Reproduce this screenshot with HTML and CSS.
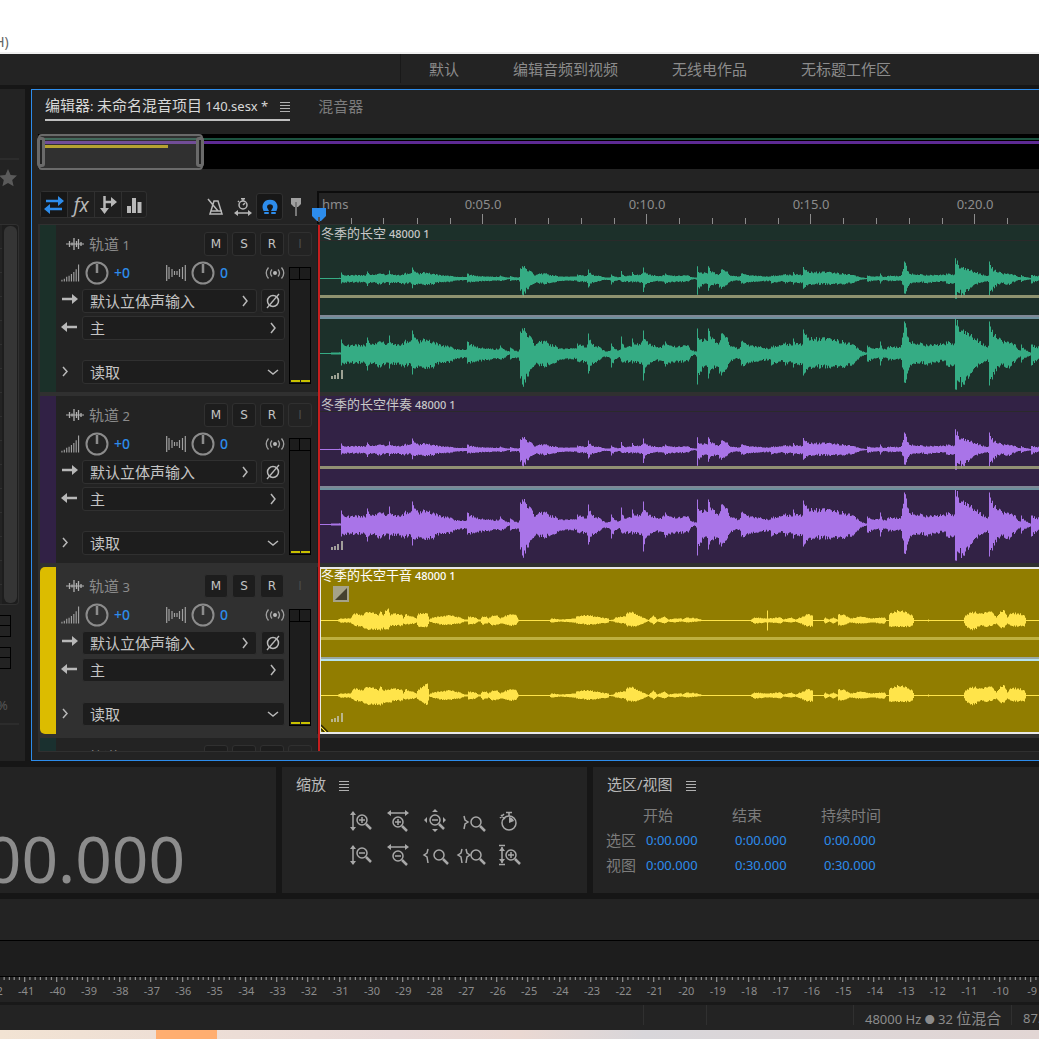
FILE: index.html
```html
<!DOCTYPE html>
<html lang="zh-CN">
<head>
  <meta charset="UTF-8" />
  <title>未命名混音项目 140.sesx</title>
  <link rel="stylesheet" href="styles.css">
</head>
<body>
  <div class="menubar"><span>(H)</span></div>

  <nav class="workspaces">
    <div class="workspace-list">
      <a href="#">默认</a>
      <a href="#">编辑音频到视频</a>
      <a href="#">无线电作品</a>
      <a href="#">无标题工作区</a>
    </div>
  </nav>

  <main class="main">
    <aside class="rail">
      <div class="rail-top">
        <svg width="18" height="18" viewBox="0 0 18 18"><path d="M9 0l2.600 6 6.400.600-4.800 4.300 1.400 6.400L9 14l-5.600 3.300 1.400-6.400L0 6.600 6.400 6z" fill="#5a5a5a"/></svg>
      </div>
      <div class="rail-list"><div class="rail-thumb"></div></div>
      <div class="rail-box"></div>
      <div class="rail-box"></div>
      <div class="rail-percent">%</div>
    </aside>

    <section class="editor">
      <div class="tabs">
        <div class="tab active">
          <span><span class="zh">编辑器</span>: <span class="zh">未命名混音项目</span> 140.sesx *</span>
          <svg class="burger" width="10" height="10" viewBox="0 0 10 10"><path d="M0 .5h10M0 3.500h10M0 6.500h10M0 9.500h10"/></svg>
        </div>
        <div class="tab zh">混音器</div>
      </div>

      <div class="overview">
        <div class="strip strip-green"></div>
        <div class="strip strip-purple"></div>
        <div class="strip strip-yellow"></div>
        <div class="navigator"><i></i><i></i></div>
      </div>

      <div class="toolbar">
        <div class="tools">
          <div class="tool-group">
            <button class="on" aria-label="输入/输出"><svg width="20" height="18" viewBox="0 0 20 18"><path d="M2 5h13M5 13h13" stroke="#2d8ceb" stroke-width="2.500"/><path d="M14 0l6 5-6 5zM6 8l-6 5 6 5z" fill="#2d8ceb"/></svg></button>
            <button aria-label="效果" class="fx">fx</button>
            <button aria-label="发送"><svg width="18" height="20" viewBox="0 0 18 20"><path d="M5.500 1v13M6 7h8" stroke="#b8b8b8" stroke-width="2.500"/><path d="M12 2l6 5-6 5zM1 13h9l-4.500 6z" fill="#b8b8b8"/></svg></button>
            <button aria-label="均衡"><svg width="16" height="16" viewBox="0 0 16 16"><path d="M1 9h4v7H1zM6 1h4v15H6zM11.500 5h4v11h-4z" fill="#b8b8b8"/></svg></button>
          </div>
          <div class="tool-group right">
            <button aria-label="节拍器"><svg width="18" height="18" viewBox="0 0 18 18"><path d="M7 3h4l4 13H3zM4 13h11M1 1l10 12" fill="none" stroke="#b8b8b8" stroke-width="1.500"/></svg></button>
            <button aria-label="时间伸缩"><svg width="18" height="18" viewBox="0 0 18 18"><circle cx="9" cy="7" r="4" fill="none" stroke="#b8b8b8" stroke-width="1.500"/><path d="M7 .700h4M9 1v2M4 3l1 1M9 7l2-2M2 15h14" stroke="#b8b8b8" stroke-width="1.500"/><path d="M4 12v6l-4-3zM14 12v6l4-3z" fill="#b8b8b8"/></svg></button>
            <button class="on" aria-label="对齐"><svg width="18" height="18" viewBox="0 0 18 18"><path d="M5.500 16V13C2 9 4 4 9 4s7 5 3.500 9v3" fill="none" stroke="#2d8ceb" stroke-width="4.500"/><path d="M2 13.500h6M10 13.500h6" stroke="#191919" stroke-width="1"/></svg></button>
            <button aria-label="标记"><svg width="12" height="20" viewBox="0 0 12 20"><path d="M1 1h10v6l-3 3H4L1 7z" fill="#a0a0a0"/><path d="M6 5v14" stroke="#777" stroke-width="2"/></svg></button>
          </div>
        </div>
        <div class="ruler" id="ruler"></div>
      </div>

      <div class="tracks" id="tracks"><div class="playhead"></div></div>
    </section>
  </main>

  <section class="panels">
    <div class="panel panel-time"><output>0:00.000</output></div>
    <div class="panel panel-zoom">
      <h2><span class="zh">缩放</span><svg class="burger" width="10" height="10" viewBox="0 0 10 10"><path d="M0 .5h10M0 3.500h10M0 6.500h10M0 9.500h10"/></svg></h2>
      <div class="zoom-grid" id="zoomGrid"></div>
    </div>
    <div class="panel panel-range">
      <h2><span><span class="zh">选区</span>/<span class="zh">视图</span></span><svg class="burger" width="10" height="10" viewBox="0 0 10 10"><path d="M0 .5h10M0 3.500h10M0 6.500h10M0 9.500h10"/></svg></h2>
      <table>
        <tr><td></td><th>开始</th><th>结束</th><th>持续时间</th></tr>
        <tr><th>选区</th><td>0:00.000</td><td>0:00.000</td><td>0:00.000</td></tr>
        <tr><th>视图</th><td>0:00.000</td><td>0:30.000</td><td>0:30.000</td></tr>
      </table>
    </div>
  </section>

  <section class="levels">
    <div class="levels-top"></div>
    <div class="levels-bar"></div>
    <div class="levels-scale" id="levels"></div>
  </section>

  <footer class="status">
    <span class="cell-s"></span>
    <span class="cell-m"></span>
    <span class="cell-l">48000 Hz <span class="dot">●</span> 32 <span class="zh">位混合</span></span>
    <span class="cell-xs">87.89 MB</span>
  </footer>
  <div class="wallpaper"><div></div></div>

  <script src="app.js"></script>
</body>
</html>
```

FILE: styles.css
```css
* {
  box-sizing: border-box;
}
body {
  margin: 0;
  background: #161616;
  color: #b8b8b8;
  font-family: "Noto Sans", "Noto Sans CJK SC", sans-serif;
  font-size: 13px;
  line-height: 20px;
  overflow: hidden;
}
button, select {
  font-family: inherit;
  color: inherit;
  margin: 0;
}
button {
  display: flex;
  align-items: center;
  justify-content: center;
  padding: 0;
  background: none;
  border: 0;
}
svg {
  display: block;
  flex: none;
}
.zh {
  font-size: 15px;
}
.burger {
  stroke: #b0b0b0;
  stroke-width: 1;
}

/* top bars */
.menubar {
  height: 54px;
  background: #fff;
  border-bottom: 2px solid #f0f0f0;
  color: #666;
  display: flex;
  align-items: flex-end;
}
.menubar span {
  margin-left: -10px;
  font-size: 14px;
}
.workspaces {
  height: 31px;
  background: #232323;
  padding-left: 400px;
}
.workspace-list {
  height: 29px;
  border-left: 1px solid #191919;
  padding-left: 28px;
  display: flex;
  align-items: center;
  gap: 54px;
}
.workspace-list a {
  color: #8c8c8c;
  text-decoration: none;
  font-size: 15px;
  white-space: nowrap;
}

/* main area */
.main {
  display: flex;
  gap: 6px;
  padding-top: 4px;
}
.rail {
  width: 25px;
  background: #232323;
  flex: none;
  overflow: hidden;
}
.rail-top {
  height: 60px;
  margin: 69px 6px 6px 0;
  border-top: 2px solid #2c2c2c;
  padding-top: 9px;
}
.rail-top svg {
  margin-left: -1px;
}
.rail-list {
  height: 381px;
  width: 19px;
  border: 1px solid #303030;
  border-left: 0;
  border-radius: 0 4px 4px 0;
  padding: 1px 1px 1px 4px;
  background: repeating-linear-gradient(#232323 0 23px, #303030 23px 24px) 0 0 / 2px 100% no-repeat #1d1d1d;
}
.rail-thumb {
  height: 100%;
  border-radius: 6px;
  background: #353535;
}
.rail-box {
  width: 11px;
  height: 22px;
  margin-top: 10px;
  margin-bottom: 8px;
  border: 1px solid #000;
  border-left: 0;
  background: linear-gradient(#000, #000) 0 9px / 100% 1px no-repeat;
}
.rail-percent {
  margin: 26px 6px 0 0;
  padding-bottom: 8px;
  border-bottom: 2px solid #2c2c2c;
  color: #555;
  text-indent: -3px;
}
.editor {
  flex: 1;
  min-width: 0;
  padding: 1px 0 8px 6px;
  background: #232323;
  border: 1px solid #2d8ceb;
  border-right: 0;
}
.tabs {
  display: flex;
  gap: 28px;
  padding-left: 7px;
  color: #7c7c7c;
  line-height: 30px;
  height: 30px;
}
.tab {
  white-space: nowrap;
}
.tab.active {
  display: flex;
  align-items: center;
  gap: 12px;
  color: #d8d8d8;
  border-bottom: 2px solid #c0c0c0;
}
.tab .burger {
  margin-top: 4px;
}

/* overview strip */
.overview {
  position: relative;
  height: 35px;
  margin-top: 13px;
  background: #000;
  padding-top: 4px;
}
.strip {
  margin-bottom: 1px;
}
.strip-green {
  height: 2px;
  background: #1c5340;
}
.strip-purple {
  height: 3px;
  background: #5d2a94;
}
.strip-yellow {
  height: 3px;
  width: 130px;
  background: #c0a400;
}
.navigator {
  position: absolute;
  left: 0;
  top: 0;
  width: 165px;
  height: 36px;
  border: 2px solid #6a6a6a;
  border-radius: 4px;
  background: rgba(160, 160, 160, .3);
  display: flex;
  justify-content: space-between;
  align-items: center;
}
.navigator i {
  width: 8px;
  height: 30px;
  border: 3px solid #6a6a6a;
  border-radius: 3px;
  margin: 0 -3px;
  background: #232323;
}

/* toolbar and time ruler */
.toolbar {
  display: flex;
  height: 55px;
  padding-top: 22px;
}
.tools {
  flex: none;
  width: 279px;
  height: 27px;
  padding-left: 2px;
  display: flex;
  justify-content: space-between;
}
.tool-group {
  display: flex;
  height: 27px;
  border: 1px solid #303030;
  border-radius: 3px;
  background: #1f1f1f;
}
.tool-group button {
  width: 27px;
  border-right: 1px solid #303030;
}
.tool-group button.on {
  background: #171717;
}
.tool-group .fx {
  font: italic 19px "Noto Sans", sans-serif;
}
.tool-group button:last-child {
  width: 24px;
  border-right: 0;
}
.tool-group.right {
  border: 0;
  background: none;
  margin: 2px 9px 0 0;
}
.tool-group.right button {
  width: 27px;
  border: 0;
}
.tool-group.right button.on {
  border: 1px solid #303030;
  border-radius: 3px;
}
.tool-group.right button:last-child {
  width: 25px;
}
.ruler {
  flex: 1;
  min-width: 0;
  height: 33px;
  border-top: 2px solid #0c0c0c;
  border-left: 2px solid #0c0c0c;
  display: flex;
  overflow: hidden;
  color: #8c8c8c;
}
.ruler div {
  flex: none;
  width: 164px;
  padding-top: 1px;
  text-align: center;
}
.ruler .ruler-unit {
  width: 82px;
  text-align: left;
  padding-left: 3px;
}
.ruler .ruler-unit svg {
  margin-left: -3px;
}

/* tracks */
.tracks {
  position: relative;
  height: 528px;
  overflow: hidden;
  border-left: 2px solid #2e2e2e;
  border-top: 1px solid #303030;
  border-bottom: 1px solid #303030;
}
.track {
  display: flex;
  height: 171px;
  border-bottom: 4px solid #303030;
}
.track-head {
  flex: none;
  width: 277px;
  display: flex;
}
.track-color {
  width: 16px;
  background: var(--dim);
}
.track.selected .track-head {
  background: #303030;
}
.track.selected .track-color {
  border-radius: 5px 0 0 5px;
  background: #dcbc00;
}
.track-body {
  flex: 1;
  padding: 7px 6px 0 5px;
}
.track-title {
  display: flex;
  align-items: center;
  gap: 4px;
  height: 24px;
  margin-right: -1px;
  color: #8c8c8c;
}
.track-title svg {
  margin-left: 5px;
}
.track-name {
  flex: 1;
  padding-left: 1px;
  white-space: nowrap;
}
.track-title button,
.phase {
  width: 24px;
  height: 24px;
  border: 1px solid #303030;
  border-radius: 3px;
  background: #1d1d1d;
  color: #c4c4c4;
  font-family: "DejaVu Sans", sans-serif;
  font-size: 12px;
}
.track-title button:disabled {
  color: #4a4a4a;
  background: none;
}
.track-controls {
  display: flex;
  gap: 4px;
}
.track-rows {
  flex: 1;
}
.row {
  display: flex;
  align-items: center;
  height: 24px;
  gap: 4px;
  margin-top: 3px;
}
.row > svg:first-child {
  width: 17px;
}
.row.knobs {
  gap: 5px;
  margin: 5px 0 4px;
  color: #2d8ceb;
  font-size: 14px;
  font-weight: 500;
}
.row.knobs > svg:first-child {
  width: 19px;
}
.row.knobs .gain {
  width: 47px;
}
.row.knobs .pan {
  flex: 1;
}
.row.automation {
  margin-top: 20px;
}
.pick {
  position: relative;
  flex: 1;
}
.pick select {
  appearance: none;
  display: block;
  width: 100%;
  height: 24px;
  padding: 0 7px;
  border: 1px solid #303030;
  border-radius: 3px;
  background: #1d1d1d;
  color: #c4c4c4;
  font-size: 15px;
}
.pick svg {
  position: absolute;
  right: 6px;
  top: 6px;
  pointer-events: none;
}
.meter {
  width: 22px;
  height: 117px;
  margin-top: 11px;
  border: 1px solid #000;
  display: grid;
  grid-template-columns: 1fr 1fr;
  grid-template-rows: 12px 1fr;
  background: #1d1d1d;
}
.meter i {
  border-bottom: 1px solid #000;
}
.meter i:nth-child(odd) {
  border-right: 1px solid #000;
}
.meter i:nth-child(n+3) {
  border: 0;
  border-bottom: 2px solid #c8c000;
  margin: 0 0 1px 1px;
}
.lane {
  flex: 1;
  min-width: 0;
  padding-left: 3px;
  background: #1d1d1d;
}
.clip {
  position: relative;
  height: 167px;
  background: var(--clip);
  overflow: hidden;
}
.clip-name {
  height: 16px;
  line-height: 16px;
  padding-left: 1px;
  font-size: 11px;
  color: #c8c8c8;
  font-weight: 500;
  white-space: nowrap;
  border-bottom: 1px solid #2a2a2a;
}
.clip-name .zh {
  font-size: 13px;
  font-weight: 400;
}
.clip > svg {
  position: absolute;
  left: 0;
  top: 0;
  width: 100%;
  height: 167px;
}
.clip .clip-level {
  left: 11px;
  top: 145px;
  width: 12px;
  height: 9px;
}
.clip .clip-fade {
  left: 12px;
  top: 17px;
  width: 16px;
  height: 16px;
}
.clip .clip-corner {
  left: 0;
  top: 155px;
  width: 8px;
  height: 8px;
}
.selected .clip {
  border: 2px solid #e8e8e8;
  border-right: 0;
  border-left-width: 1px;
}
.selected .clip > .wave {
  top: -2px;
  left: -1px;
  width: calc(100% + 1px);
}
.selected .clip .clip-level {
  left: 10px;
  top: 144px;
}
.selected .clip-name {
  color: #fff;
  border-bottom: 0;
  height: 14px;
  line-height: 12px;
  padding-left: 0;
}
.playhead {
  position: absolute;
  z-index: 2;
  left: 278px;
  top: 0;
  bottom: 0;
  width: 2px;
  background: #c41e1e;
}
.marker {
  position: absolute;
  z-index: 3;
  left: 312px;
  top: 208px;
}

/* lower panels */
.panels {
  display: flex;
  gap: 6px;
  margin: 6px 0;
  height: 126px;
}
.panel {
  background: #232323;
  overflow: hidden;
}
.panel h2 {
  display: flex;
  align-items: center;
  gap: 13px;
  margin: 7px 0 0;
  padding-left: 14px;
  height: 20px;
  font-size: 15px;
  font-weight: 400;
}
.panel h2 .burger {
  margin-top: 3px;
}
.panel-time {
  flex: 0 0 276px;
  display: flex;
  align-items: center;
  justify-content: flex-end;
  padding: 58px 91px 0 0;
  color: #8c8c8c;
  font-size: 64px;
  line-height: 66px;
}
.panel-zoom {
  flex: 0 0 305px;
}
.panel-range {
  flex: 1;
}
.zoom-grid {
  display: grid;
  grid-template-columns: repeat(5, 37px);
  grid-auto-rows: 34px;
  margin: 10px 0 0 60px;
}
.zoom-grid svg {
  fill: none;
  stroke: #a8a8a8;
  stroke-width: 1.5;
}
.zoom-grid .solid {
  fill: #a8a8a8;
  stroke: none;
}
.panel-range table {
  margin: 8px 0 0 13px;
  border-collapse: collapse;
  table-layout: fixed;
  width: 290px;
}
.panel-range th,
.panel-range td {
  height: 25px;
  padding: 0;
  width: 89px;
  text-align: left;
}
.panel-range th {
  font-size: 15px;
  font-weight: 400;
  color: #7c7c7c;
}
.panel-range td {
  color: #2d8ceb;
  padding-left: 3px;
}
.panel-range tr > :first-child {
  width: 37px;
}

/* level scale */
.levels-top {
  height: 42px;
  background: #232323;
  border-bottom: 1px solid #000;
}
.levels-bar {
  height: 36px;
  background: #1d1d1d;
  border-bottom: 1px solid #000;
}
.levels {
  overflow: hidden;
}
.levels-scale {
  display: flex;
  height: 25px;
  margin: 0 -9px 0 -21px;
  background: #232323;
}
.levels-scale div {
  flex: 1;
  min-width: 0;
  text-align: center;
  font-size: 11px;
  line-height: 18px;
  color: #8c8c8c;
}
.levels-scale svg {
  width: 100%;
}
.status {
  display: flex;
  justify-content: flex-end;
  height: 28px;
  border-top: 3px solid #191919;
  background: #232323;
  color: #8c8c8c;
  line-height: 26px;
  overflow: hidden;
}
.status > span {
  flex: none;
  white-space: nowrap;
  border-left: 1px solid #303030;
  padding-left: 11px;
  height: 20px;
}
.status .dot {
  font-size: 10px;
}
.cell-s {
  width: 63px;
}
.cell-m {
  width: 147px;
}
.cell-l {
  width: 158px;
}
.cell-xs {
  width: 28px;
}
.wallpaper {
  height: 9px;
  background: linear-gradient(90deg, #f2e3d3, #e8d9d8 38%, #ead8d2 50%, #d8d6da 62%, #e2d6d4);
}
.wallpaper div {
  width: 61px;
  height: 9px;
  margin-left: 156px;
  background: #ffae70;
}
```

FILE: app.js
```js
// envelope points: x, peak above, peak below
const music = [
  [320,.5,.5],[329,.5,.5],[331,1,1],[340,1,1],[341,14,12],[343,9,10],[350,8,9],[364,8,9],[367,16,17],[370,9,9],
  [377,11,13],[380,12,14],[387,10,9],[389,18,15],[391,10,10],[399,8,11],[404,12,14],[410,12,10],[412,23,21],[414,16,15],
  [418,12,12],[423,15,14],[434,11,13],[440,9,9],[452,6,8],[458,4,5],[466,4,4],[467,12,10],[475,7,8],[490,5,6],
  [498,4,5],[500,8,6],[505,3,4],[509,2,1],[510,6,6],[518,2,4],[520,22,25],[522,25,31],[525,22,29],[529,18,18],
  [532,14,14],[535,8,11],[538,11,11],[545,12,13],[548,10,11],[556,7,9],[560,5,6],[576,5,5],[577,10,8],[586,6,8],
  [588,20,20],[591,10,12],[600,6,6],[606,2,3],[610,3,5],[611,10,14],[618,3,4],[620,4,5],[621,17,8],[624,6,8],
  [630,7,8],[632,15,10],[634,9,9],[641,11,9],[643,23,27],[645,14,14],[655,7,7],[659,6,7],[665,12,13],[672,7,8],
  [688,8,8],[694,2,1],[696,2,3],[697,25,31],[700,14,18],[706,13,12],[708,25,25],[712,16,15],[716,11,13],[719,11,20],
  [721,20,22],[727,16,14],[730,7,8],[739,5,5],[741,12,12],[748,9,10],[758,7,8],[770,5,6],[771,7,12],[780,8,8],
  [785,11,12],[791,8,9],[793,15,14],[795,9,10],[802,9,10],[803,24,22],[808,16,14],[815,14,13],[830,15,15],[838,13,13],
  [845,11,13],[853,9,11],[858,5,6],[866,1,1],[867,8,8],[872,5,6],[878,5,4],[880,12,12],[883,4,4],[888,7,7],
  [900,6,5],[902,16,14],[904,32,29],[906,26,26],[908,16,17],[913,10,10],[920,11,9],[927,8,12],[935,9,9],[944,9,7],[946,12,12],
  [954,10,11],[955,36,36],[958,27,28],[963,24,31],[970,18,20],[977,15,14],[985,8,8],[987,6,6],[989,32,32],[994,18,21],
  [1000,15,12],[1009,10,15],[1015,9,8],[1020,3,3],[1021,9,9],[1030,1,2],[1031,9,12],[1039,6,6]
];
const voice = [
  [320,.5,.5],[337,.5,.5],[340,2,2],[350,2,2],[354,7,5],[362,5,6],[365,8,8],[372,8,9],[378,5,9],[380,9,10],[383,5,7],
  [385,10,9],[388,12,9],[390,5,5],[393,7,5],[402,5,5],[403,2,3],[405,6,4],[414,3,3],[416,2,2],[418,7,6],[427,7,6],
  [429,1,1],[432,3,2],[440,4,4],[450,5,4],[460,3,3],[464,1,1],[467,1,1],[468,4,4],[475,3,3],[478,1,1],[480,1,1],
  [482,4,4],[486,4,3],[488,2,2],[492,5,5],[497,5,4],[500,2,3],[505,5,4],[506,4,4],[509,6,5],[516,5,4],[518,1,1],
  [519,.5,.5],[549,.5,.5],[551,2,2],[560,1,1],[575,2,2],[576,4,3],[588,5,4],[600,3,3],[608,2,2],[609,.5,.5],[613,1,1],
  [615,3,2],[625,4,3],[627,8,6],[633,8,6],[640,4,4],[645,2,2],[648,.5,.5],[653,5,4],[657,1,1],[664,4,3],[668,1,1],
  [674,2,2],[681,2,1],[682,1,1],[686,3,2],[697,2,1],[702,.5,.5],[750,.5,.5],[754,3,3],[766,2,2],[767,10,10],[768,2,2],
  [780,3,3],[783,1,1],[791,3,2],[795,1,1],[803,4,4],[807,6,6],[812,5,6],[813,.5,.5],[823,.5,.5],[825,3,3],[829,1,1],
  [833,3,3],[837,1,1],[838,6,5],[845,5,4],[850,2,2],[860,4,3],[870,2,2],[884,3,3],[886,.5,.5],[888,.5,.5],[889,6,6],
  [894,9,6],[902,10,6],[908,7,6],[912,5,5],[914,.5,.5],[927,.5,.5],[928,1,1],[929,.5,.5],[963,.5,.5],[965,5,5],
  [970,8,9],[974,8,9],[980,7,5],[984,8,6],[992,8,5],[996,3,3],[1000,9,7],[1004,10,7],[1007,3,3],[1010,7,5],
  [1018,7,6],[1024,5,6],[1026,.5,.5],[1039,.5,.5]
];
// the right voice channel differs in a few peaks only
const voiceRight = voice.map(([x, up, down]) => {
  if (x >= 385 && x <= 390) return [x, 6, 7];
  if (x === 418) return [x, 6, 4];
  if (x === 427) return [x, 12, 9];
  if (x === 767) return [x, 2, 2];
  return [x, up, down];
});
const quiet = a => .3 * a + .007 * a * a + .3;
const full = a => a;

// music: sharp attack, quick decay; voice: even swell
const struck = (a, b, t) => a + (b - a) * (b > a ? t * t * t : Math.sqrt(t));
const even = (a, b, t) => a + (b - a) * t;

function wavePath(points, mid, scale, ease, rough) {
  let top = "", bottom = "", seed = 7, k = 0;
  const jitter = () => {
    seed = (seed * 16807) % 2147483647;
    return 1 + rough * ((seed % 1000) / 500 - 1);
  };
  for (let x = 320; x < 1039; x++) {
    while (k < points.length - 2 && points[k + 1][0] <= x) k++;
    const [x0, u0, d0] = points[k], [x1, u1, d1] = points[k + 1];
    const t = (x - x0) / (x1 - x0);
    const up = scale(ease(u0, u1, t) * (t === 0 ? 1 : jitter()));
    const down = scale(ease(d0, d1, t) * (t === 0 ? 1 : jitter()));
    const px = x - 320;
    top += `L${px} ${(mid - up).toFixed(1)}H${px + 1}`;
    bottom = `L${px + 1} ${(mid + down).toFixed(1)}H${px}` + bottom;
  }
  return `M0 ${mid}${top}${bottom}Z`;
}

const chevron = `<svg width="12" height="12" viewBox="0 0 12 12"><path d="M4 1l4 5-4 5" fill="none" stroke="#b8b8b8" stroke-width="1.500"/></svg>`;
const chevronDown = `<svg width="12" height="12" viewBox="0 0 12 12"><path d="M1 4l5 4 5-4" fill="none" stroke="#b8b8b8" stroke-width="1.500"/></svg>`;
const knob = `<svg width="24" height="24" viewBox="0 0 24 24"><circle cx="12" cy="12" r="10.500" fill="none" stroke="#8c8c8c" stroke-width="2"/><path d="M12 3v9" stroke="#8c8c8c" stroke-width="2.500"/></svg>`;
const bars = (list, h) => list.map(([x, n]) => `M${x} ${h - n}v${n}`).join("");

const tracks = [
  { name: 1, clip: "冬季的长空", dim: "#1b3029", bg: "#1c302a", wave: "#35ac84", left: music, right: music },
  { name: 2, clip: "冬季的长空伴奏", dim: "#312145", bg: "#322245", wave: "#a974e8", left: music, right: music },
  { name: 3, clip: "冬季的长空干音", dim: "#dcbc00", bg: "#917d00", wave: "#ffe44a", left: voice, right: voiceRight, selected: true },
  { name: 4, dim: "#1a302f" }
];

function clipHtml(t) {
  const sel = t.selected;
  const ease = sel ? even : struck;
  const rough = sel ? .15 : .18;
  return `<div class="clip">
    <div class="clip-name"><span class="zh">${t.clip}</span> 48000 1</div>
    <svg class="wave" viewBox="0 0 719 167" preserveAspectRatio="none">
      <path d="${wavePath(t.left, 53.5, sel ? full : quiet, ease, rough)}" fill="${t.wave}"/>
      <path d="${wavePath(t.right, 128.5, full, ease, rough)}" fill="${t.wave}"/>
      <path d="M0 71.500h719" stroke="${sel ? "#c6b94a" : "#a3a57c"}" stroke-opacity=".85" stroke-width="3"/>
      <path d="M0 91.500h719" stroke="${sel ? "#9aa7a0" : "#7f8896"}" stroke-width="3"/>
      <path d="M0 93h719" stroke="${sel ? "#b5e3ee" : "#6c8f9c"}" stroke-width="2"/>
    </svg>
    <svg class="clip-level" viewBox="0 0 12 9"><path d="${bars([[1, 3], [4, 4], [7, 6], [11, 9]], 9)}" stroke="#c8c8b8" stroke-width="1.500"/></svg>
    ${sel ? `<svg class="clip-fade" viewBox="0 0 16 16"><path d="M0 0h16v16H0z" fill="#a5a289"/><path d="M14 2v12H2z" fill="#45412f"/></svg>
    <svg class="clip-corner" viewBox="0 0 8 8"><path d="M0 1l7 7M0 5l3 3" stroke="#2a2500" stroke-width="1.300"/><path d="M0 3l5 5" stroke="#ffe44a"/></svg>` : ""}
  </div>`;
}

function trackHtml(t) {
  const n = t.name;
  return `<div class="track ${t.selected ? "selected" : ""}" style="--dim:${t.dim};--clip:${t.bg || "none"}">
    <div class="track-head">
      <div class="track-color"></div>
      <div class="track-body">
        <div class="track-title">
          <svg width="18" height="14" viewBox="0 0 18 14"><path d="M0 7h18" stroke="#b0b0b0"/><path d="M3.500 4v6M6 5.500v3M8 1v12M10.500 4v6M12.500 2v10M15 5v4" stroke="#b0b0b0" stroke-width="1.300"/></svg>
          <span class="track-name"><span class="zh">轨道</span> ${n}</span>
          <button>M</button><button>S</button><button>R</button><button disabled>I</button>
        </div>
        <div class="track-controls">
          <div class="track-rows">
            <div class="row knobs">
              <svg height="18" viewBox="0 0 20 18"><path d="${bars([[1, 2], [3.5, 3], [6, 5], [8.5, 6], [11, 8], [13.5, 10], [16, 13], [18.5, 18]], 18)}" stroke="#a0a0a0" stroke-width="1.200"/></svg>
              ${knob}<span class="gain">+0</span>
              <svg width="20" height="18" viewBox="0 0 20 18"><path d="M.7 1v16M3 3v12M6 5v8M8.500 7v4M11 7v4M13.500 5v8M16.500 3v12M19.300 1v16" stroke="#a0a0a0" stroke-width="1.200"/></svg>
              ${knob}<span class="pan">0</span>
              <svg width="20" height="12" viewBox="0 0 20 12"><circle cx="10" cy="6" r="2" fill="#b8b8b8"/><path d="M7 2.500q-3 3.500 0 7M13 2.500q3 3.500 0 7M3.500 .5q-4.500 5.500 0 11M16.500 .5q4.500 5.500 0 11" fill="none" stroke="#a0a0a0" stroke-width="1.300"/></svg>
            </div>
            <div class="row">
              <svg height="14" viewBox="0 0 17 14"><path d="M1 5h11" stroke="#b8b8b8" stroke-width="2.500"/><path d="M11 0l6 5-6 5z" fill="#b8b8b8"/></svg>
              <label class="pick"><select aria-label="输入 ${n}"><option>默认立体声输入</option></select>${chevron}</label>
              <button class="phase" aria-label="反相"><svg width="16" height="16" viewBox="0 0 16 16"><circle cx="8" cy="8" r="5.500" fill="none" stroke="#b8b8b8" stroke-width="1.500"/><path d="M2 15L14 1" stroke="#b8b8b8" stroke-width="1.300"/></svg></button>
            </div>
            <div class="row">
              <svg height="14" viewBox="0 0 17 14"><path d="M5 6h11" stroke="#b8b8b8" stroke-width="2.500"/><path d="M6 1L0 6l6 5z" fill="#b8b8b8"/></svg>
              <label class="pick"><select aria-label="输出 ${n}"><option>主</option></select>${chevron}</label>
            </div>
            <div class="row automation">
              <svg height="12" viewBox="0 0 17 12"><path d="M2 1l4 4.500L2 10" fill="none" stroke="#b8b8b8" stroke-width="1.500"/></svg>
              <label class="pick"><select aria-label="自动化 ${n}"><option>读取</option></select>${chevronDown}</label>
            </div>
          </div>
          <div class="meter"><i></i><i></i><i></i><i></i></div>
        </div>
      </div>
    </div>
    <div class="lane">${t.clip ? clipHtml(t) : ""}</div>
  </div>`;
}
document.getElementById("tracks").insertAdjacentHTML("beforeend", tracks.map(trackHtml).join(""));

// time ruler
const tick = (x, h) => `M${x} ${10 - h}v${h}`;
let ruler = `<div class="ruler-unit">hms<svg width="82" height="10"><path d="${tick(32.5, 6)}${tick(64.5, 6)}" stroke="#8c8c8c" shape-rendering="crispEdges"/></svg></div>`;
for (const s of ["0:05.0", "0:10.0", "0:15.0", "0:20.0"]) {
  ruler += `<div>${s}<svg width="164" height="10"><path d="${tick(16.5, 6)}${tick(49.5, 6)}${tick(81.5, 10)}${tick(114.5, 6)}${tick(147.5, 6)}" stroke="#8c8c8c" shape-rendering="crispEdges"/></svg></div>`;
}
document.getElementById("ruler").innerHTML = ruler;
document.getElementById("ruler").insertAdjacentHTML("afterend",
  `<svg class="marker" width="14" height="14" viewBox="0 0 14 14"><path d="M0 0h14v8l-5 5H5L0 8z" fill="#2d8ceb"/><path d="M7 9v5" stroke="#555" stroke-width="2"/></svg>`);

// level scale, one cell per dB
let levels = "";
for (let db = -42; db <= -9; db++) {
  levels += `<div><svg height="5" viewBox="0 0 30 5" preserveAspectRatio="none"><path d="M4 0v3M9 0v3M14 0v5M19 0v3M24 0v3M29 0v3" stroke="#8c8c8c" stroke-width="1.200"/></svg>${db}</div>`;
}
document.getElementById("levels").innerHTML = levels;

// zoom buttons
const lens = (x, y, sign) => `<circle cx="${x}" cy="${y}" r="5"/><path d="M${x + 4} ${y + 4}l5 5" stroke-width="2.500"/>`
  + (sign ? `<path d="M${x - 3} ${y}h6${sign === "+" ? `M${x} ${y - 3}v6` : ""}"/>` : "");
const vert = `<path d="M4 3v18"/><path class="solid" d="M1 6l3-4 3 4zM1 18l3 4 3-4z"/>`;
const horiz = `<path d="M3 4h18"/><path class="solid" d="M5 1v6L1 4zM19 1v6l4-3z"/>`;
const icons = [
  ["放大（振幅）", vert + lens(13, 11, "+")],
  ["放大（时间）", horiz + lens(12, 13, "+")],
  ["全部缩小", lens(12, 11, "-") + `<path class="solid" d="M9 3l3-3 3 3zM9 20l3 3 3-3zM4 8v6l-3-3zM20 8v6l3-3z"/>`],
  ["放大至出点", `<path d="M4 7l1 4 3 2-3 2-1 5"/>` + lens(16, 13)],
  ["按时间缩放", `<circle cx="12" cy="14" r="7"/><path d="M9 3.500h6M12 3v4M4 6l4 4M3 9l4-4"/><path class="solid" d="M12 14V8a6 6 0 0 1 5 4z"/>`],
  ["缩小（振幅）", vert + lens(13, 10, "-")],
  ["缩小（时间）", horiz + lens(12, 13, "-")],
  ["放大至入点", `<path d="M5 6L4 10l-3 2 3 2 1 6"/>` + lens(16, 12)],
  ["缩放至选区", `<path d="M2 6l-1 4-3 2 3 2 1 6M6 6l1 4 3 2-3 2-1 6"/>` + lens(16, 12)],
  ["缩放所选轨道", `<path d="M5 4v16M2 2.500h6M2 21.500h6"/><path class="solid" d="M2 8l3-4 3 4zM2 16l3 4 3-4z"/>` + lens(14, 12, "+")]
];
document.getElementById("zoomGrid").innerHTML = icons.map(([label, art]) =>
  `<button aria-label="${label}"><svg width="24" height="24" viewBox="0 0 24 24" overflow="visible">${art}</svg></button>`).join("");
```
